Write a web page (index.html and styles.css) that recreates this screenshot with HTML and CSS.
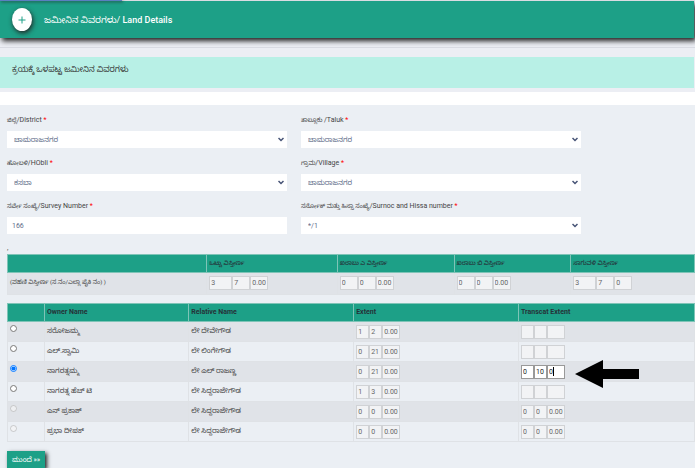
FILE: index.html
```
<!DOCTYPE html>
<html lang="kn">
<head>
    <meta charset="UTF-8">
    <meta name="viewport" content="width=device-width, initial-scale=1.0">
    <title>Land Details</title>
    <link rel="stylesheet" href="styles.css">
</head>
<body>
    <div class="tab-strip"></div>
    <header class="section-header">
        <button type="button" class="toggle" aria-label="Land Details">
            <svg viewBox="0 0 8 8" width="8" height="8"><path d="M4 0.5v7M0.5 4h7" stroke="#1da087" fill="none"/></svg>
        </button>
        <h1>ಜಮೀನಿನ ವಿವರಗಳು/ <span class="en">Land Details</span></h1>
    </header>
    <hr class="divider">
    <h2 class="banner">ಕ್ರಯಕ್ಕೆ ಒಳಪಟ್ಟ ಜಮೀನಿನ ವಿವರಗಳು</h2>
    <div class="spacer"></div>

    <form class="land-form">
        <div class="fields">
            <div class="field">
                <label for="district">ಜಿಲ್ಲೆ<span class="en">/District <span class="req">*</span></span></label>
                <select id="district"><option>ಚಾಮರಾಜನಗರ</option></select>
            </div>
            <div class="field">
                <label for="taluk">ತಾಲ್ಲೂಕು <span class="en">/Taluk <span class="req">*</span></span></label>
                <select id="taluk"><option>ಚಾಮರಾಜನಗರ</option></select>
            </div>
            <div class="field">
                <label for="hobli">ಹೋಬಳಿ<span class="en">/HObli <span class="req">*</span></span></label>
                <select id="hobli"><option>ಕಸಬಾ</option></select>
            </div>
            <div class="field">
                <label for="village">ಗ್ರಾಮ<span class="en">/Village <span class="req">*</span></span></label>
                <select id="village"><option>ಚಾಮರಾಜನಗರ</option></select>
            </div>
            <div class="field">
                <label for="survey">ಸರ್ವೇ ಸಂಖ್ಯೆ<span class="en">/Survey Number <span class="req">*</span></span></label>
                <input type="text" id="survey" value="166">
            </div>
            <div class="field">
                <label for="surnoc">ಸರ್ನೋಕ್ ಮತ್ತು ಹಿಸ್ಸಾ ಸಂಖ್ಯೆ<span class="en">/Surnoc and Hissa number <span class="req">*</span></span></label>
                <select id="surnoc"><option>*/1</option></select>
            </div>
        </div>

        <p class="note">,</p>

        <table class="grid area">
            <colgroup><col class="a1"><col class="a2"><col class="a3"><col class="a4"><col></colgroup>
            <thead>
                <tr><th></th><th>ಒಟ್ಟು ವಿಸ್ತೀರ್ಣ</th><th>ಖರಾಬು ಎ ವಿಸ್ತೀರ್ಣ</th><th>ಖರಾಬು ಬಿ ವಿಸ್ತೀರ್ಣ</th><th>ಸಾಗುವಳಿ ವಿಸ್ತೀರ್ಣ</th></tr>
            </thead>
            <tbody>
                <tr>
                    <td>(ಪಹಣಿ ವಿಸ್ತೀರ್ಣ (ಸ.ನಂ/ಎಲ್ಲಾ ಪೈಕಿ ನಂ) )</td>
                    <td><div class="nums wide"><input aria-label="Acre" value="3" disabled><input aria-label="Gunta" value="7" disabled><input aria-label="Fraction" value="0.00" disabled></div></td>
                    <td><div class="nums"><input aria-label="Acre" value="0" disabled><input aria-label="Gunta" value="0" disabled><input aria-label="Fraction" value="0.00" disabled></div></td>
                    <td><div class="nums"><input aria-label="Acre" value="0" disabled><input aria-label="Gunta" value="0" disabled><input aria-label="Fraction" value="0.00" disabled></div></td>
                    <td><div class="nums wide"><input aria-label="Acre" value="3" disabled><input aria-label="Gunta" value="7" disabled><input aria-label="Fraction" value="0" disabled></div></td>
                </tr>
            </tbody>
        </table>

        <table class="grid owners">
            <colgroup><col class="o1"><col class="o2"><col class="o3"><col class="o4"><col></colgroup>
            <thead>
                <tr><th></th><th>Owner Name</th><th>Relative Name</th><th>Extent</th><th>Transcat Extent</th></tr>
            </thead>
            <tbody>
                <tr>
                    <td><input type="radio" name="owner" aria-label="ಸರೋಜಮ್ಮ"></td>
                    <td>ಸರೋಜಮ್ಮ</td>
                    <td>ಲೇ ದೇವೇಗೌಡ</td>
                    <td><div class="nums"><input aria-label="Acre" value="1" disabled><input aria-label="Gunta" value="2" disabled><input aria-label="Fraction" value="0.00" disabled></div></td>
                    <td><div class="nums"><input aria-label="Acre" disabled><input aria-label="Gunta" disabled><input aria-label="Fraction" disabled></div></td>
                </tr>
                <tr>
                    <td><input type="radio" name="owner" aria-label="ಎಲ್.ಸ್ವಾಮಿ"></td>
                    <td>ಎಲ್.ಸ್ವಾಮಿ</td>
                    <td>ಲೇ ಲಿಂಗೇಗೌಡ</td>
                    <td><div class="nums"><input aria-label="Acre" value="0" disabled><input aria-label="Gunta" value="21" disabled><input aria-label="Fraction" value="0.00" disabled></div></td>
                    <td><div class="nums"><input aria-label="Acre" disabled><input aria-label="Gunta" disabled><input aria-label="Fraction" disabled></div></td>
                </tr>
                <tr>
                    <td><input type="radio" name="owner" aria-label="ನಾಗರತ್ನಮ್ಮ" checked></td>
                    <td>ನಾಗರತ್ನಮ್ಮ</td>
                    <td>ಲೇ ಎಲ್ ರಾಜಣ್ಣ</td>
                    <td><div class="nums"><input aria-label="Acre" value="0" disabled><input aria-label="Gunta" value="21" disabled><input aria-label="Fraction" value="0.00" disabled></div></td>
                    <td>
                        <div class="nums active"><input aria-label="Acre" value="0"><input aria-label="Gunta" value="10"><input aria-label="Fraction" value="0"><span class="caret"></span>
                            <svg class="arrow" viewBox="0 0 64 28" width="64" height="28"><path d="M0 14L28 0v9h36v10H28v9z" fill="#000"/></svg>
                        </div>
                    </td>
                </tr>
                <tr>
                    <td><input type="radio" name="owner" aria-label="ನಾಗರತ್ನ ಹೆಚ್ ಟಿ"></td>
                    <td>ನಾಗರತ್ನ ಹೆಚ್ ಟಿ</td>
                    <td>ಲೇ ಸಿದ್ದರಾಜೇಗೌಡ</td>
                    <td><div class="nums"><input aria-label="Acre" value="1" disabled><input aria-label="Gunta" value="3" disabled><input aria-label="Fraction" value="0.00" disabled></div></td>
                    <td><div class="nums"><input aria-label="Acre" disabled><input aria-label="Gunta" disabled><input aria-label="Fraction" disabled></div></td>
                </tr>
                <tr>
                    <td><input type="radio" name="owner" aria-label="ಎನ್ ಪ್ರಕಾಶ್" disabled></td>
                    <td>ಎನ್ ಪ್ರಕಾಶ್</td>
                    <td>ಲೇ ಸಿದ್ದರಾಜೇಗೌಡ</td>
                    <td><div class="nums"><input aria-label="Acre" value="0" disabled><input aria-label="Gunta" value="0" disabled><input aria-label="Fraction" value="0.00" disabled></div></td>
                    <td><div class="nums"><input aria-label="Acre" value="0" disabled><input aria-label="Gunta" value="0" disabled><input aria-label="Fraction" value="0.00" disabled></div></td>
                </tr>
                <tr>
                    <td><input type="radio" name="owner" aria-label="ಪ್ರಭಾ ದೀಪಕ್" disabled></td>
                    <td>ಪ್ರಭಾ ದೀಪಕ್</td>
                    <td>ಲೇ ಸಿದ್ದರಾಜೇಗೌಡ</td>
                    <td><div class="nums"><input aria-label="Acre" value="0" disabled><input aria-label="Gunta" value="0" disabled><input aria-label="Fraction" value="0.00" disabled></div></td>
                    <td><div class="nums"><input aria-label="Acre" value="0" disabled><input aria-label="Gunta" value="0" disabled><input aria-label="Fraction" value="0.00" disabled></div></td>
                </tr>
            </tbody>
        </table>

        <button type="button" class="next">ಮುಂದೆ »»</button>
    </form>
</body>
</html>
```
FILE: styles.css
```
* {
    box-sizing: border-box;
}
body {
    margin: 0;
    background: #eceef4;
    color: #444;
    font-family: Roboto, "Noto Sans", "Noto Sans Kannada", sans-serif;
    font-size: 7px;
    line-height: 12px;
    overflow: hidden;
}
.tab-strip {
    width: 122px;
    height: 1px;
    background: #5a7fc0;
    box-shadow: 1px 1px 3px #222;
    position: relative;
    z-index: 1;
}
.section-header {
    display: flex;
    align-items: center;
    gap: 12px;
    height: 37px;
    margin-right: 1px;
    padding-left: 12px;
    background: #1da087;
    box-shadow: 2px 3px 5px #222;
}
.toggle {
    display: flex;
    align-items: center;
    justify-content: center;
    width: 20px;
    height: 23px;
    padding: 0;
    border: none;
    border-radius: 50%;
    background: #fff;
    box-shadow: 1px 2px 5px #222;
}
.section-header h1 {
    margin: 0;
    color: #fff;
    font-size: 9px;
    font-weight: 400;
}
.section-header .en {
    font-weight: 500;
}
.divider {
    margin: 9px 0;
    border: none;
    border-top: 1px solid #d9dbe3;
}
.banner {
    margin: 0 1px 4px 0;
    padding: 7px 12px 12px;
    background: #b8f0e6;
    color: #333;
    font-size: 8px;
    font-weight: 400;
}
.spacer {
    height: 13px;
    background: #fff;
}
.land-form {
    padding: 8px 0 8px 7px;
    background: #ebeff4;
}
.fields {
    display: grid;
    grid-template-columns: 1fr 1fr;
    column-gap: 14px;
    row-gap: 8px;
    margin-right: 114px;
}
.field label {
    display: block;
    height: 14px;
    margin-bottom: 4px;
    font-size: 6px;
    line-height: 14px;
}
.field .en {
    font-size: 7px;
}
.req {
    color: #f00;
}
.field input,
.field select {
    display: block;
    width: 100%;
    height: 17px;
    padding: 0 5px;
    border: none;
    border-radius: 0;
    background: #fff;
    color: #5d6b88;
    font: inherit;
}
.field select {
    padding: 0 7px;
    appearance: none;
    background: #fff url("data:image/svg+xml,%3Csvg xmlns='http://www.w3.org/2000/svg' width='6' height='5'%3E%3Cpath d='M.5 1l2.500 2.500 2.500-2.500' fill='none' stroke='%23465375' stroke-width='1.500'/%3E%3C/svg%3E") no-repeat right 3px center;
}
.note {
    margin: 8px 0 0;
}
.grid {
    width: 100%;
    margin-bottom: 8px;
    border-collapse: collapse;
    table-layout: fixed;
}
.grid th,
.grid td {
    padding: 0 2px;
    border: 1px solid #dfe2e6;
    text-align: left;
    vertical-align: top;
}
.grid th {
    height: 18px;
    padding-top: 2px;
    border-color: #7fc4b7;
    background: #1da087;
    color: #253238;
}
.area th {
    font-size: 6px;
    font-weight: 500;
}
.grid tbody tr:nth-child(odd) {
    background: #e0e3e8;
}
.area td {
    height: 22px;
    padding-top: 3px;
    font-size: 6px;
}
.owners td {
    height: 20px;
    padding-top: 3px;
}
.a1 { width: 29%; }
.a2 { width: 19%; }
.a3, .a4 { width: 17%; }
.o1 { width: 37px; }
.o2 { width: 21%; }
.o3, .o4 { width: 24%; }
.nums {
    display: flex;
    position: relative;
}
.nums input {
    width: 13px;
    height: 14px;
    padding: 0 1px;
    border: 1px solid #d0d2d5;
    border-radius: 0;
    background: #f2f3f5;
    color: #666;
    font-family: inherit;
    font-size: 7px;
}
.nums input:last-of-type {
    width: 18px;
}
.area .nums input {
    width: 18px;
}
.area .nums.wide input:first-child {
    width: 23px;
}
.nums.active input {
    border-color: #999;
    background: #fff;
    color: #222;
}
.caret {
    position: absolute;
    top: 2px;
    left: 32px;
    width: 1px;
    height: 9px;
    background: #000;
}
.arrow {
    position: absolute;
    top: -5px;
    left: 54px;
}
input[type="radio"] {
    display: block;
    width: 7px;
    height: 7px;
    margin: 0;
}
.next {
    display: block;
    height: 17px;
    margin-top: 9px;
    padding: 0 5px;
    border: none;
    background: #1da087;
    color: #fff;
    font: inherit;
    box-shadow: 2px 2px 4px #222;
}
```
